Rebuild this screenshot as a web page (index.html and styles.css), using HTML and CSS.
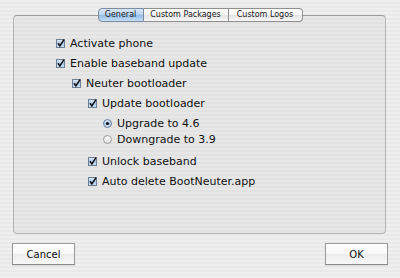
FILE: index.html
```html
<!DOCTYPE html>
<html lang="en">
<head>
    <meta charset="UTF-8">
    <title>BootNeuter</title>
    <link rel="stylesheet" href="styles.css">
</head>
<body>

    <!-- shared gradients for the aqua controls -->
    <svg class="defs" width="0" height="0">
        <defs>
            <linearGradient id="aqua" x1="0" y1="0" x2="0" y2="1">
                <stop offset="0" stop-color="#e4effa"/>
                <stop offset="0.5" stop-color="#a9c9ec"/>
                <stop offset="1" stop-color="#cfe3f8"/>
            </linearGradient>
            <linearGradient id="plain" x1="0" y1="0" x2="0" y2="1">
                <stop offset="0" stop-color="#ffffff"/>
                <stop offset="1" stop-color="#dcdcdc"/>
            </linearGradient>
        </defs>
    </svg>

    <div class="window">
        <div class="prefs">
            <!-- Tabs -->
            <div class="tabs">
                <span class="tab tab-general active">General</span>
                <span class="tab tab-packages">Custom Packages</span>
                <span class="tab tab-logos">Custom Logos</span>
            </div>

            <!-- General panel -->
            <div class="panel">
                <ul class="options">
                    <li class="opt">
                        <svg class="box" viewBox="0 0 9 9"><rect x=".5" y=".5" width="8" height="8" fill="url(#aqua)" stroke="#6f7f93"/><path d="M2 4.3 L3.9 7 L8 0.6" fill="none" stroke="#111" stroke-width="1.5"/></svg>
                        <span>Activate phone</span>
                    </li>
                    <li class="opt">
                        <svg class="box" viewBox="0 0 9 9"><rect x=".5" y=".5" width="8" height="8" fill="url(#aqua)" stroke="#6f7f93"/><path d="M2 4.3 L3.9 7 L8 0.6" fill="none" stroke="#111" stroke-width="1.5"/></svg>
                        <span>Enable baseband update</span>
                    </li>
                    <li class="opt l1">
                        <svg class="box" viewBox="0 0 9 9"><rect x=".5" y=".5" width="8" height="8" fill="url(#aqua)" stroke="#6f7f93"/><path d="M2 4.3 L3.9 7 L8 0.6" fill="none" stroke="#111" stroke-width="1.5"/></svg>
                        <span>Neuter bootloader</span>
                    </li>
                    <li class="opt l2">
                        <svg class="box" viewBox="0 0 9 9"><rect x=".5" y=".5" width="8" height="8" fill="url(#aqua)" stroke="#6f7f93"/><path d="M2 4.3 L3.9 7 L8 0.6" fill="none" stroke="#111" stroke-width="1.5"/></svg>
                        <span>Update bootloader</span>
                    </li>
                    <li class="opt radio l3 first-radio">
                        <svg class="box" viewBox="0 0 9 9"><circle cx="4.5" cy="4.5" r="4" fill="url(#aqua)" stroke="#6f7f93"/><circle cx="4.5" cy="4.5" r="1.6" fill="#111"/></svg>
                        <span>Upgrade to 4.6</span>
                    </li>
                    <li class="opt radio l3">
                        <svg class="box" viewBox="0 0 9 9"><circle cx="4.5" cy="4.5" r="4" fill="url(#plain)" stroke="#9a9a9a"/></svg>
                        <span>Downgrade to 3.9</span>
                    </li>
                    <li class="opt l2 after-radio">
                        <svg class="box" viewBox="0 0 9 9"><rect x=".5" y=".5" width="8" height="8" fill="url(#aqua)" stroke="#6f7f93"/><path d="M2 4.3 L3.9 7 L8 0.6" fill="none" stroke="#111" stroke-width="1.5"/></svg>
                        <span>Unlock baseband</span>
                    </li>
                    <li class="opt l2">
                        <svg class="box" viewBox="0 0 9 9"><rect x=".5" y=".5" width="8" height="8" fill="url(#aqua)" stroke="#6f7f93"/><path d="M2 4.3 L3.9 7 L8 0.6" fill="none" stroke="#111" stroke-width="1.5"/></svg>
                        <span>Auto delete BootNeuter.app</span>
                    </li>
                </ul>
            </div>
        </div>

        <!-- Dialog buttons -->
        <div class="actions">
            <button class="btn">Cancel</button>
            <button class="btn">OK</button>
        </div>
    </div>

</body>
</html>
```

FILE: styles.css
```css
* {
    margin: 0;
    padding: 0;
    box-sizing: border-box;
}

body {
    font-family: 'DejaVu Sans', sans-serif;
    color: #111;
    width: 400px;
    height: 278px;
    overflow: hidden;
    background: #ededed repeating-linear-gradient(to bottom, #efefef 0, #efefef 2px, #e9e9e9 2px, #e9e9e9 4px);
}

.defs {
    display: block;
    width: 0;
    height: 0;
}

.window {
    padding: 8px 12px 0 12px;
}

.prefs {
    margin: 0 2px 0 1px;
}

/* Tabs (segmented control) */
.tabs {
    display: flex;
    justify-content: center;
    position: relative;
    z-index: 1;
    margin-bottom: -7px;
    padding-left: 1px;
}

.tab {
    height: 14px;
    font-size: 8px;
    line-height: 12px;
    text-align: center;
    border: 1px solid #8f8f8f;
    border-left: none;
    background: linear-gradient(to bottom, #ffffff 0%, #f4f4f4 50%, #e4e4e4 51%, #f6f6f6 100%);
    color: #1a1a1a;
}

.tab-general {
    width: 46px;
    border-left: 1px solid #7b8ca3;
    border-color: #7b8ca3;
    border-radius: 4px 0 0 4px;
}

.tab-packages {
    width: 85px;
}

.tab-logos {
    width: 74px;
    border-radius: 0 4px 4px 0;
}

.tab.active {
    background: linear-gradient(to bottom, #d9e8f9 0%, #b5d1f0 50%, #93bde9 51%, #c4dcf6 100%);
}

/* Panel */
.panel {
    height: 219px;
    border: 1px solid #b4b4b4;
    border-top-color: #9c9c9c;
    border-radius: 4px;
    background: #e5e5e5 repeating-linear-gradient(to bottom, #e7e7e7 0, #e7e7e7 2px, #e2e2e2 2px, #e2e2e2 4px);
    padding: 17px 0 0 42px;
}

.options {
    list-style: none;
}

.opt {
    display: flex;
    align-items: center;
    height: 20px;
    font-size: 11px;
}

.opt .box {
    width: 9px;
    height: 9px;
    margin-right: 5px;
    flex: none;
    overflow: visible;
}

.opt.radio {
    height: 16px;
}

.l1 { padding-left: 16px; }
.l2 { padding-left: 32px; }
.l3 { padding-left: 47px; }

.first-radio { margin-top: 2px; }
.after-radio { margin-top: 4px; }

/* Buttons */
.actions {
    display: flex;
    justify-content: space-between;
    margin-top: 9px;
}

.btn {
    width: 63px;
    height: 22px;
    font-family: 'DejaVu Sans', sans-serif;
    font-size: 10px;
    color: #111;
    border: 1px solid #9a9a9a;
    border-bottom-color: #8a8a8a;
    background: linear-gradient(to bottom, #ffffff 0%, #f7f7f7 50%, #ececec 51%, #f8f8f8 100%);
    box-shadow: 0 1px 1px rgba(0, 0, 0, 0.08);
}
```
